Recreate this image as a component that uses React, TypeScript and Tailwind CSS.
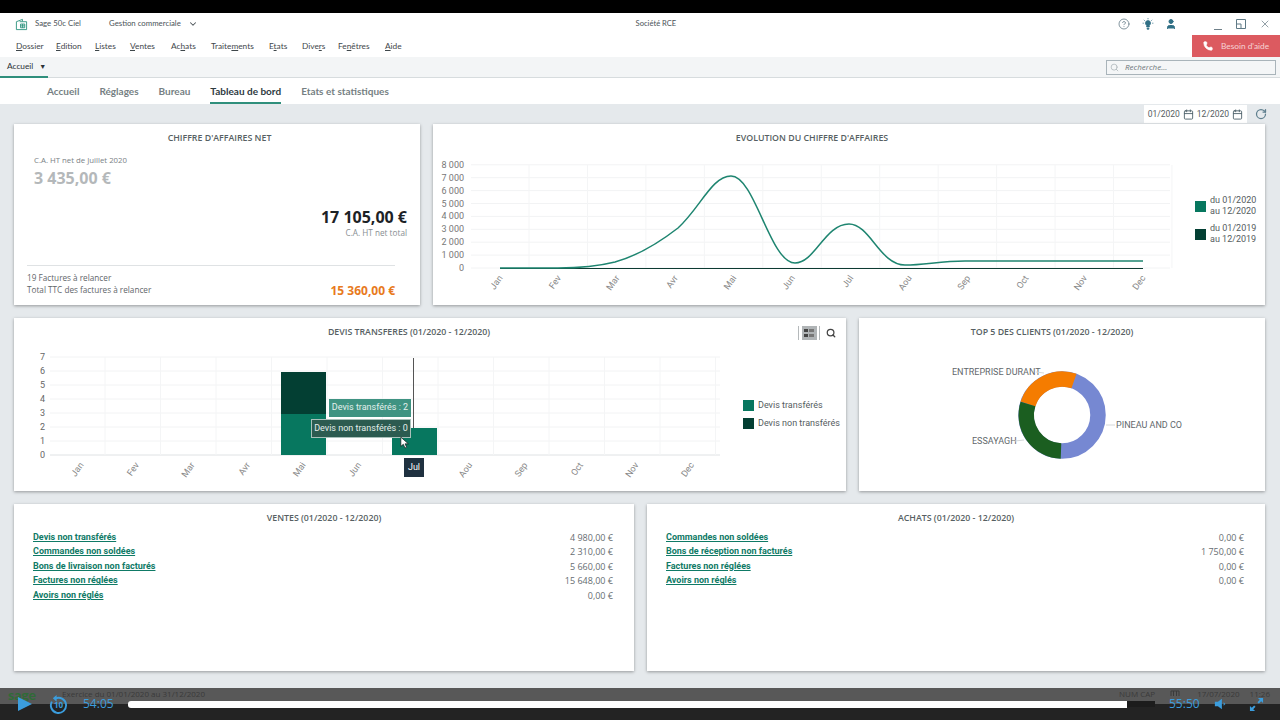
import { Calendar, ChevronDown, CircleHelp, Phone, RotateCw, Search, User, X } from "lucide-react";
import type { ReactNode } from "react";

// ─── Data ────────────────────────────────────────────────

const menu = [
  { pre: "", key: "D", post: "ossier", w: "w-[40px]" },
  { pre: "", key: "E", post: "dition", w: "w-[39px]" },
  { pre: "", key: "L", post: "istes", w: "w-[35px]" },
  { pre: "", key: "V", post: "entes", w: "w-[41px]" },
  { pre: "Ac", key: "h", post: "ats", w: "w-[40px]" },
  { pre: "Traite", key: "m", post: "ents", w: "w-[58px]" },
  { pre: "E", key: "t", post: "ats", w: "w-[33px]" },
  { pre: "Dive", key: "r", post: "s", w: "w-[36px]" },
  { pre: "Fe", key: "n", post: "êtres", w: "w-[47px]" },
  { pre: "", key: "A", post: "ide", w: "w-[30px]" },
];

const months = ["Jan", "Fev", "Mar", "Avr", "Mai", "Jun", "Jul", "Aou", "Sep", "Oct", "Nov", "Dec"];

const ventes = [
  ["Devis non transférés", "4 980,00 €"],
  ["Commandes non soldées", "2 310,00 €"],
  ["Bons de livraison non facturés", "5 660,00 €"],
  ["Factures non réglées", "15 648,00 €"],
  ["Avoirs non réglés", "0,00 €"],
];

const achats = [
  ["Commandes non soldées", "0,00 €"],
  ["Bons de réception non facturés", "1 750,00 €"],
  ["Factures non réglées", "0,00 €"],
  ["Avoirs non réglés", "0,00 €"],
];

// ─── Small parts ─────────────────────────────────────────

function CardTitle({ children, className = "" }: { children: ReactNode; className?: string }) {
  return <div className={`pt-[8px] text-center text-[8.8px] leading-[13px] font-semibold text-[#575f63] ${className}`}>{children}</div>;
}

function Tab({ label, active }: { label: string; active?: boolean }) {
  return (
    <div
      className={
        active
          ? "flex h-[26px] items-center border-b-2 border-[#2f8f7c] pt-[2px] text-[#2e3a3f]"
          : "flex h-[26px] items-center border-b-2 border-transparent pt-[2px] text-[#767f83]"
      }
    >
      {label}
    </div>
  );
}

function LegendItem({ color, children }: { color: string; children: ReactNode }) {
  return (
    <div className="flex items-center gap-[4px]">
      <div className="h-[11px] w-[11px]" style={{ backgroundColor: color }} />
      <div className="font-['Roboto',sans-serif] text-[9px] leading-[11px] text-[#555c60]">{children}</div>
    </div>
  );
}

function Totals({ title, rows }: { title: string; rows: string[][] }) {
  return (
    <div className="h-[167px] flex-1 bg-white px-[19px] shadow-[0_1px_3px_rgba(0,0,0,0.35)]">
      <CardTitle>{title}</CardTitle>
      <div className="mt-[5px] flex flex-col">
        {rows.map(([label, amount]) => (
          <div key={label} className="flex h-[14.6px] items-center justify-between text-[9px]">
            <span className="font-['Roboto',sans-serif] font-bold text-[#0f7a66] underline">{label}</span>
            <span className="pr-[2px] text-[#666d71]">{amount}</span>
          </div>
        ))}
      </div>
    </div>
  );
}

// ─── Charts ──────────────────────────────────────────────

function LineChart() {
  const xs = months.map((_, i) => 500 + i * 58.45);
  return (
    <svg viewBox="433 154 745 146" className="h-[146px] w-[745px] shrink-0 font-['Roboto',sans-serif]">
      {[0, 1, 2, 3, 4, 5, 6, 7, 8].map((n) => (
        <g key={n}>
          <line x1="471" x2="1170" y1={268 - n * 12.9} y2={268 - n * 12.9} stroke="#f2f3f4" />
          <text x="464" y={271 - n * 12.9} textAnchor="end" fontSize="9" fill="#777">
            {n === 0 ? "0" : `${n} 000`}
          </text>
        </g>
      ))}
      {xs.map((x, i) => (
        <g key={months[i]}>
          <line x1={x + 29} x2={x + 29} y1="165" y2="268" stroke="#f4f5f6" />
          <text transform={`translate(${x + 3} 278) rotate(-55)`} textAnchor="end" fontSize="9" fill="#888">
            {months[i]}
          </text>
        </g>
      ))}
      <line x1="500" x2="1143" y1="268.5" y2="268.5" stroke="#0d3b32" strokeWidth="1.2" />
      <path
        d="M500 268 L558 268 C580 268 595 267 615 262 C640 255 660 242 678 228 C700 208 712 176 731 176 C755 176 770 263 795 263 C815 263 825 224 849 224 C870 224 880 265 905 265 C925 265 940 261 965 261 L1143 261"
        fill="none"
        stroke="#1e8570"
        strokeWidth="1.5"
      />
    </svg>
  );
}

function BarChart() {
  const xs = months.map((_, i) => 78 + i * 55.5);
  return (
    <div className="relative h-[141px] w-[710px] shrink-0 font-['Roboto',sans-serif]">
      <svg viewBox="14 350 710 141" className="h-[141px] w-[710px]">
        {[0, 1, 2, 3, 4, 5, 6, 7].map((n) => (
          <g key={n}>
            <line x1="50" x2="720" y1={455 - n * 14} y2={455 - n * 14} stroke={n === 0 ? "#dfe2e4" : "#f2f3f4"} />
            <text x="45" y={458 - n * 14} textAnchor="end" fontSize="9" fill="#666">
              {n}
            </text>
          </g>
        ))}
        {xs.map((x, i) => (
          <g key={months[i]}>
            <line x1={x + 27} x2={x + 27} y1="357" y2="455" stroke="#f4f5f6" />
            {months[i] !== "Jul" && (
              <text transform={`translate(${x + 6} 465) rotate(-55)`} textAnchor="end" fontSize="9" fill="#888">
                {months[i]}
              </text>
            )}
          </g>
        ))}
        <rect x="281" y="372" width="45" height="42" fill="#033f33" />
        <rect x="281" y="414" width="45" height="41" fill="#07775f" />
        <rect x="392" y="428" width="45" height="27" fill="#07775f" />
        <line x1="413.5" x2="413.5" y1="358" y2="428" stroke="#555" />
      </svg>
      <div className="absolute top-[49px] left-[315px] flex h-[18px] w-[82px] items-center justify-center bg-[#3f9382] text-[9px] whitespace-nowrap text-[#e4efec]">
        Devis transférés : 2
      </div>
      <div className="absolute top-[69px] left-[297px] flex h-[19px] w-[100px] items-center justify-center border border-[#a9c0ba] bg-[#2c5b50] text-[9px] whitespace-nowrap text-[#e4efec]">
        Devis non transférés : 0
      </div>
      <div className="absolute top-[108px] left-[390px] flex h-[19px] w-[20px] items-center justify-center bg-[#1f3140] text-[9px] text-white">
        Jul
      </div>
      <svg viewBox="0 0 12 14" className="absolute top-[87px] left-[386px] h-[12px] w-[10px]">
        <path d="M1 0 L1 11 L4 8.5 L6 13 L8 12 L6 8 L10 8 Z" fill="#fff" stroke="#111" strokeWidth="0.8" />
      </svg>
    </div>
  );
}

function Donut() {
  return (
    <svg viewBox="859 345 406 146" className="h-[146px] w-[406px] font-['Roboto',sans-serif]">
      <circle cx="1062" cy="415" r="36" fill="none" stroke="#7688d2" strokeWidth="15.5" />
      <path d="M1074 381 A36 36 0 0 0 1028 404" fill="none" stroke="#f57c00" strokeWidth="15.5" />
      <path d="M1028 404 A36 36 0 0 0 1061 451" fill="none" stroke="#1b5e20" strokeWidth="15.5" />
      <g fontSize="9" fill="#62686c">
        <text x="952" y="375">ENTREPRISE DURANT</text>
        <text x="972" y="444">ESSAYAGH</text>
        <text x="1116" y="428">PINEAU AND CO</text>
      </g>
      <g stroke="#d5d8da" fill="none">
        <path d="M1036 372 L1044 373" />
        <path d="M1015 441 L1024 440" />
        <path d="M1106 425 L1115 425" />
      </g>
    </svg>
  );
}

// ─── Page ────────────────────────────────────────────────

export default function App() {
  return (
    <div className="relative flex h-[720px] w-[1280px] flex-col overflow-hidden bg-black font-['Open_Sans',sans-serif]">
      <div className="h-[13px] shrink-0 bg-black" />

      {/* Title bar */}
      <div className="flex h-[22px] shrink-0 items-center bg-white pr-[9px] pl-[15px] font-['Lato',sans-serif] text-[7.8px] text-[#4b5358]">
        <svg viewBox="0 0 14 14" className="h-[13px] w-[13px]" fill="none" stroke="#1c8a74" strokeWidth="0.9">
          <path d="M1.5 4 L8 1.5 L8 3.5 M1.5 4 V12.5 H12.5 V4 H5" />
          <path d="M6 6.5 H10.5 V10.5 H6 Z M8.2 6.5 V10.5 M6 8.5 H10.5" />
        </svg>
        <span className="ml-[7px] w-[74px]">Sage 50c Ciel</span>
        <span>Gestion commerciale</span>
        <ChevronDown className="ml-[7px] h-[10px] w-[10px]" strokeWidth={2.5} />
        <span className="flex-1 pr-[4px] text-center text-[7.6px]">Société RCE</span>
        <CircleHelp className="h-[12px] w-[12px] text-[#5b7380]" strokeWidth={1.5} />
        <svg viewBox="0 0 12 12" className="ml-[12px] h-[12px] w-[12px]" fill="#2f6f85" stroke="#2f6f85" strokeWidth="0.7">
          <path d="M6 2.5 A2.6 2.6 0 0 1 7.4 7.3 V9 H4.6 V7.3 A2.6 2.6 0 0 1 6 2.5 Z M5 10.2 H7 V11.2 H5 Z" />
          <path d="M6 0 V1.3 M1.8 1.8 L2.8 2.8 M10.2 1.8 L9.2 2.8 M0.6 5.2 H1.9 M11.4 5.2 H10.1" fill="none" />
        </svg>
        <User className="ml-[11px] h-[12px] w-[12px] text-[#2f6f85]" fill="#2f6f85" strokeWidth={2} />
        <div className="ml-[37px] h-[1px] w-[8px] translate-y-[5px] bg-[#6f8089]" />
        <svg viewBox="0 0 10 10" className="ml-[14px] h-[10px] w-[10px]" fill="none" stroke="#5f7a86">
          <path d="M0.5 0.5 H9.5 V9.5 H0.5 Z M0.5 5 H5 V9.5" />
        </svg>
        <X className="ml-[13px] h-[12px] w-[12px] text-[#6f8089]" strokeWidth={1.5} />
      </div>

      {/* Menu */}
      <div className="flex h-[22px] shrink-0 items-center justify-between bg-white pl-[16px] font-['Lato',sans-serif] text-[8.3px] text-[#3f474b]">
        <div className="flex">
          {menu.map((m) => (
            <div key={m.pre + m.key} className={m.w}>
              {m.pre}
              <span className="underline">{m.key}</span>
              {m.post}
            </div>
          ))}
        </div>
        <div className="flex h-[22px] w-[88px] items-center gap-[8px] bg-[#dc5a60] pl-[11px] text-[#f6d3d5]">
          <Phone className="h-[10px] w-[10px] text-white" fill="#fff" />
          <span>Besoin d'aide</span>
        </div>
      </div>

      {/* Open windows */}
      <div className="flex h-[21px] shrink-0 items-center justify-between border-b border-[#d7dcde] bg-[#f3f5f6] pr-[4px]">
        <div className="flex h-[21px] w-[48px] items-center gap-[6px] border-b-2 border-[#2f8f7c] pl-[7px] font-['Lato',sans-serif] text-[8.3px] text-[#2b3236]">
          Accueil
          <span className="text-[7px]">▼</span>
        </div>
        <div className="flex h-[15px] w-[170px] items-center gap-[6px] border border-[#a9b4ba] bg-[#f4f6f7] pl-[3px] text-[8px] text-[#6c7478] italic">
          <Search className="h-[9px] w-[9px] text-[#aab3b7]" strokeWidth={2} />
          Recherche...
        </div>
      </div>

      {/* Section tabs */}
      <div className="flex h-[26px] shrink-0 gap-[20px] bg-white pl-[47px] font-['Lato',sans-serif] text-[10px] font-bold">
        <Tab label="Accueil" />
        <Tab label="Réglages" />
        <Tab label="Bureau" />
        <Tab label="Tableau de bord" active />
        <Tab label="Etats et statistiques" />
      </div>

      {/* Dashboard */}
      <div className="flex flex-1 flex-col bg-[#e5e9ec] px-[14px] pr-[15px]">
        <div className="flex h-[20px] shrink-0 items-center justify-end">
          <div className="flex h-[18px] items-center bg-white px-[4px] font-['Roboto',sans-serif] text-[8.5px] text-[#555d61]">
            01/2020
            <Calendar className="mx-[3px] h-[11px] w-[11px] text-[#4f626b]" strokeWidth={2} />
            12/2020
            <Calendar className="ml-[3px] h-[11px] w-[11px] text-[#4f626b]" strokeWidth={2} />
          </div>
          <RotateCw className="mr-[-2px] ml-[8px] h-[12px] w-[12px] text-[#5f7f8e]" strokeWidth={2.5} />
        </div>

        <div className="flex h-[181px] shrink-0 gap-[13px]">
          <div className="flex w-[406px] shrink-0 flex-col bg-white pr-[13px] pl-[13px] shadow-[0_1px_3px_rgba(0,0,0,0.35)]">
            <CardTitle className="pl-[5px]">CHIFFRE D'AFFAIRES NET</CardTitle>
            <div className="mt-[10px] pl-[7px] text-[7.8px] leading-[11px] text-[#7a8185]">C.A. HT net de Juillet 2020</div>
            <div className="pl-[7px] text-[16px] leading-[25px] font-bold text-[#b4b8ba]">3 435,00 €</div>
            <div className="mt-[16px] text-right text-[16px] leading-[21px] font-bold text-[#1c2226]">17 105,00 €</div>
            <div className="text-right text-[8.2px] leading-[9px] text-[#888e92]">C.A. HT net total</div>
            <div className="mt-[28px] mr-[12px] border-t border-[#dfe2e4] pt-[5px] text-[8.2px] text-[#5f666a]">
              <div className="leading-[13px]">19 Factures à relancer</div>
              <div className="flex h-[13px] items-center justify-between">
                <span>Total TTC des factures à relancer</span>
                <span className="text-[12px] font-bold text-[#e87a1d]">15 360,00 €</span>
              </div>
            </div>
          </div>
          <div className="flex flex-1 flex-col bg-white shadow-[0_1px_3px_rgba(0,0,0,0.35)]">
            <CardTitle className="pr-[74px]">EVOLUTION DU CHIFFRE D'AFFAIRES</CardTitle>
            <div className="mt-[9px] flex">
              <LineChart />
              <div className="mt-[41px] ml-[17px] flex flex-col gap-[6px]">
                <LegendItem color="#07775f">du 01/2020<br />au 12/2020</LegendItem>
                <LegendItem color="#033f33">du 01/2019<br />au 12/2019</LegendItem>
              </div>
            </div>
          </div>
        </div>

        <div className="mt-[13px] flex h-[173px] shrink-0 gap-[13px]">
          <div className="relative flex w-[832px] shrink-0 flex-col bg-white shadow-[0_1px_3px_rgba(0,0,0,0.35)]">
            <CardTitle className="pr-[42px]">DEVIS TRANSFERES (01/2020 - 12/2020)</CardTitle>
            <div className="absolute top-[8px] right-[10px] flex items-center gap-[6px]">
              <div className="flex h-[14px] w-[22px] items-center justify-center border-x border-[#b5b9bb]">
                <div className="flex h-[14px] w-[15px] flex-col justify-center gap-[2px] bg-[#b0b4b6] px-[2px]">
                  <div className="h-[3px] w-[10px] bg-[linear-gradient(90deg,#444_0_4px,transparent_4px_5px,#777_5px)]" />
                  <div className="h-[3px] w-[10px] bg-[linear-gradient(90deg,#444_0_4px,transparent_4px_5px,#777_5px)]" />
                </div>
              </div>
              <Search className="h-[10px] w-[10px] text-[#444]" strokeWidth={3} />
            </div>
            <div className="mt-[11px] flex">
              <BarChart />
              <div className="mt-[50px] ml-[19px] flex flex-col gap-[7px]">
                <LegendItem color="#07775f">Devis transférés</LegendItem>
                <LegendItem color="#033f33">Devis non transférés</LegendItem>
              </div>
            </div>
          </div>
          <div className="flex flex-1 flex-col bg-white shadow-[0_1px_3px_rgba(0,0,0,0.35)]">
            <CardTitle className="pr-[20px]">TOP 5 DES CLIENTS (01/2020 - 12/2020)</CardTitle>
            <div className="mt-[6px]">
              <Donut />
            </div>
          </div>
        </div>

        <div className="mt-[13px] flex shrink-0 gap-[13px]">
          <div className="w-[620px] shrink-0">
            <Totals title="VENTES (01/2020 - 12/2020)" rows={ventes} />
          </div>
          <Totals title="ACHATS (01/2020 - 12/2020)" rows={achats} />
        </div>
      </div>

      {/* Status bar with the video player drawn over it */}
      <div className="relative h-[32px] shrink-0 bg-[#232323]">
        <div className="flex h-[16px] items-start bg-[#585858] pt-[1px] pl-[8px] text-[8px] leading-[10px] text-[#3a3a3a]">
          <span className="w-[54px] font-['Lato',sans-serif] text-[14px] leading-[11px] font-bold text-[#2f6b36]">sage</span>
          <span>Exercice du 01/01/2020 au 31/12/2020</span>
          <span className="ml-auto">NUM CAP</span>
          <svg viewBox="0 0 10 8" className="ml-[15px] h-[8px] w-[10px]" fill="none" stroke="#3a3a3a">
            <path d="M1 7 V2 H9 V7 M3.5 2 V7 M6.5 2 V7" />
          </svg>
          <span className="ml-[17px]">17/07/2020</span>
          <span className="mr-[10px] ml-[10px]">11:26</span>
        </div>
        <div className="absolute inset-x-0 top-[4px] flex h-[24px] items-center pl-[17px] text-[12px] leading-[12px] text-[#3b9ddd]">
          <svg viewBox="0 0 16 16" className="h-[16px] w-[16px]">
            <path d="M1 1 L15 8 L1 15 Z" fill="#3b9ddd" />
          </svg>
          <svg viewBox="0 0 20 20" className="ml-[16px] h-[19px] w-[19px]" fill="none" stroke="#3b9ddd" strokeWidth="2">
            <path d="M7 3.5 A8 8 0 1 1 3 7" />
            <path d="M8 0 L4 3.5 L8 7 Z" fill="#3b9ddd" stroke="none" />
            <text x="10" y="13.5" textAnchor="middle" fontSize="8.5" fontWeight="700" fill="#3b9ddd" stroke="none">10</text>
          </svg>
          <span className="ml-[15px] w-[45px]">54:05</span>
          <div className="flex h-[7px] w-[1027px] items-center">
            <div className="h-[7px] w-[999px] rounded-l-[3px] bg-white" />
            <div className="h-[6px] w-[28px] bg-[#1c1c1c]" />
          </div>
          <span className="ml-[14px]">55:50</span>
          <svg viewBox="0 0 16 16" className="ml-[14px] h-[14px] w-[14px]" fill="#3b9ddd">
            <path d="M1 5.5 H4.5 L9 2 V14 L4.5 10.5 H1 Z" />
            <path d="M11 6 L13 8 L11 10 Z" />
          </svg>
          <svg viewBox="0 0 16 16" className="ml-[21px] h-[15px] w-[15px]" fill="#3b9ddd">
            <path d="M15 1 V6.5 L13 4.5 L10.5 7 L9 5.5 L11.5 3 L9.5 1 Z" />
            <path d="M1 15 V9.5 L3 11.5 L5.5 9 L7 10.5 L4.5 13 L6.5 15 Z" />
          </svg>
        </div>
      </div>
    </div>
  );
}
